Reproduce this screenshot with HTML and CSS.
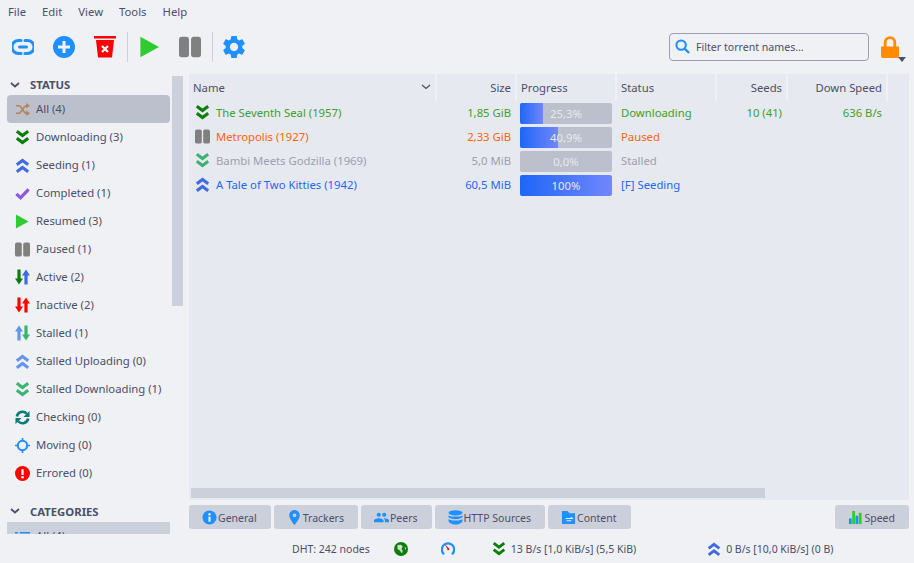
FILE: index.html
```html
<!DOCTYPE html>
<html lang="en">
<head>
  <meta charset="UTF-8">
  <title>qBittorrent</title>
  <link rel="stylesheet" href="styles.css">
</head>
<body>
  <svg class="sprite" width="0" height="0">
    <symbol id="i-down" viewBox="0 0 15 15"><path d="M1.800 1.200 7.500 5.500l5.700-4.300M1.800 8.200 7.500 12.500l5.700-4.300" fill="none" stroke="currentColor" stroke-width="3"/></symbol>
    <symbol id="i-up" viewBox="0 0 15 15"><path d="M1.800 6.800 7.500 2.500l5.700 4.300M1.800 13.800 7.500 9.500l5.700 4.300" fill="none" stroke="currentColor" stroke-width="3"/></symbol>
    <symbol id="i-play" viewBox="0 0 16 16"><path d="M1 .5v15L14.500 8z" fill="currentColor"/></symbol>
    <symbol id="i-pause" viewBox="0 0 16 16"><rect x="0" y=".5" width="7.250" height="15" rx="2" fill="currentColor"/><rect x="8.750" y=".5" width="7.250" height="15" rx="2" fill="currentColor"/></symbol>
    <symbol id="i-arrow-down" viewBox="0 0 8 16"><path d="M4 15.500 0 9.500h2.400V.5h3.200v9H8z" fill="currentColor"/></symbol>
    <symbol id="i-arrow-up" viewBox="0 0 8 16"><path d="M4 .5 8 6.500H5.600v9H2.400v-9H0z" fill="currentColor"/></symbol>
  </svg>

  <nav class="menubar">
    <a>File</a><a>Edit</a><a>View</a><a>Tools</a><a>Help</a>
  </nav>

  <div class="toolbar">
    <svg class="tool tool-link" viewBox="0 0 22 22"><path d="M9 4.500H6.500a6.500 6.500 0 0 0 0 13H9M13 4.500h2.500a6.500 6.500 0 0 1 0 13H13" fill="none" stroke="#1e90ff" stroke-width="3" stroke-linecap="round"/><path d="M7.500 11h7" stroke="#1e90ff" stroke-width="3" stroke-linecap="round"/></svg>
    <svg class="tool tool-add" viewBox="0 0 22 22"><circle cx="11" cy="11" r="11" fill="#1e90ff"/><path d="M11 5v12M5 11h12" stroke="#eff1f5" stroke-width="3"/></svg>
    <svg class="tool tool-trash" viewBox="0 0 22 22"><path d="M0 0h22v2.500H0z" fill="#f00"/><path d="M2 4h18l-2 17.500H4z" fill="#f00"/><path d="M8 10l6 6M14 10l-6 6" stroke="#fff" stroke-width="2.200"/></svg>
    <span class="tool-sep"></span>
    <svg class="tool tool-play"><use href="#i-play"/></svg>
    <svg class="tool tool-pause"><use href="#i-pause"/></svg>
    <span class="tool-sep"></span>
    <svg class="tool tool-gear" viewBox="2.500 2.500 19 19"><path fill="#1e90ff" d="M19.140 12.940c.04-.3.06-.61.06-.94 0-.32-.02-.64-.07-.94l2.030-1.580c.18-.14.23-.41.12-.61l-1.920-3.320c-.12-.22-.37-.29-.59-.22l-2.390.96c-.5-.38-1.030-.7-1.620-.94l-.36-2.540c-.04-.24-.24-.41-.48-.41h-3.840c-.24 0-.43.17-.47.41l-.36 2.540c-.59.24-1.130.57-1.620.94l-2.390-.96c-.22-.08-.47 0-.59.22L2.740 8.870c-.12.21-.08.47.12.61l2.030 1.580c-.05.3-.09.63-.09.94s.02.64.07.94l-2.030 1.580c-.18.14-.23.41-.12.61l1.920 3.320c.12.22.37.29.59.22l2.390-.96c.5.38 1.030.7 1.620.94l.36 2.540c.05.24.24.41.48.41h3.840c.24 0 .44-.17.47-.41l.36-2.540c.59-.24 1.130-.56 1.620-.94l2.390.96c.22.08.47 0 .59-.22l1.920-3.320c.12-.22.07-.47-.12-.61l-2.010-1.580zM12 15.600c-1.980 0-3.600-1.620-3.600-3.600s1.620-3.600 3.600-3.600 3.600 1.620 3.600 3.600-1.620 3.600-3.600 3.600z"/></svg>
    <label class="filter">
      <svg class="filter-icon" viewBox="0 0 16 16"><circle cx="6.500" cy="6.500" r="5" fill="none" stroke="#1e90ff" stroke-width="2.200"/><path d="M10 10l5 5" stroke="#1e90ff" stroke-width="2.400"/></svg>
      <span>Filter torrent names…</span>
    </label>
    <div class="lock">
      <svg class="lock-icon" viewBox="0 0 18 22"><path d="M4.200 12V6.500a4.800 4.800 0 0 1 9.600 0V12" fill="none" stroke="#ff8c00" stroke-width="2.800"/><path d="M0 10.500h18V20a2 2 0 0 1-2 2H2a2 2 0 0 1-2-2z" fill="#ff8c00"/></svg>
      <span class="lock-arrow"></span>
    </div>
  </div>

  <div class="main">
    <aside class="side">
      <div class="side-list">
        <h3 class="side-head"><svg class="head-chev" viewBox="0 0 10 6"><path d="M1 1l4 3.500L9 1" fill="none" stroke="#4c4f69" stroke-width="1.800"/></svg>STATUS</h3>
        <a class="side-item selected"><svg class="ico" viewBox="0 0 16 16"><path d="M1 4h3c3 0 5 8 8 8h2M1 12h3c3 0 5-8 8-8h2" fill="none" stroke="#b5835a" stroke-width="1.800"/><path d="M12 1l4 3-4 3zM12 9l4 3-4 3z" fill="#b5835a"/></svg>All (4)</a>
        <a class="side-item"><svg class="ico c-down"><use href="#i-down"/></svg>Downloading (3)</a>
        <a class="side-item"><svg class="ico c-up"><use href="#i-up"/></svg>Seeding (1)</a>
        <a class="side-item"><svg class="ico" viewBox="0 0 16 16"><path d="M1.500 8.500 6 12.500 14.500 3.500" fill="none" stroke="#8a5cdc" stroke-width="3.400"/></svg>Completed (1)</a>
        <a class="side-item"><svg class="ico c-play"><use href="#i-play"/></svg>Resumed (3)</a>
        <a class="side-item"><svg class="ico c-pause"><use href="#i-pause"/></svg>Paused (1)</a>
        <a class="side-item"><span class="ico-pair"><svg class="c-down"><use href="#i-arrow-down"/></svg><svg class="c-up"><use href="#i-arrow-up"/></svg></span>Active (2)</a>
        <a class="side-item"><span class="ico-pair c-red"><svg><use href="#i-arrow-down"/></svg><svg><use href="#i-arrow-up"/></svg></span>Inactive (2)</a>
        <a class="side-item"><span class="ico-pair"><svg class="c-stall-up"><use href="#i-arrow-up"/></svg><svg class="c-stall-down"><use href="#i-arrow-down"/></svg></span>Stalled (1)</a>
        <a class="side-item"><svg class="ico c-stall-up"><use href="#i-up"/></svg>Stalled Uploading (0)</a>
        <a class="side-item"><svg class="ico c-stall-down"><use href="#i-down"/></svg>Stalled Downloading (1)</a>
        <a class="side-item"><svg class="ico" viewBox="0 0 16 16"><path d="M2 7a6 6 0 0 1 10.500-3M14 9a6 6 0 0 1-10.500 3" fill="none" stroke="#0b7a75" stroke-width="2.800"/><path d="M15.500 1v6.500H9zM.5 15V8.500H7z" fill="#0b7a75"/></svg>Checking (0)</a>
        <a class="side-item"><svg class="ico" viewBox="0 0 16 16"><circle cx="8" cy="8" r="5" fill="none" stroke="#1e90ff" stroke-width="2.200"/><path d="M8 0v3M8 13v3M0 8h3M13 8h3" stroke="#1e90ff" stroke-width="1.800"/></svg>Moving (0)</a>
        <a class="side-item"><svg class="ico" viewBox="0 0 16 16"><circle cx="8" cy="8" r="8" fill="#f00"/><path d="M8 3.500v6" stroke="#fff" stroke-width="2.400"/><circle cx="8" cy="12" r="1.400" fill="#fff"/></svg>Errored (0)</a>
        <h3 class="side-head head-cat"><svg class="head-chev" viewBox="0 0 10 6"><path d="M1 1l4 3.500L9 1" fill="none" stroke="#4c4f69" stroke-width="1.800"/></svg>CATEGORIES</h3>
        <a class="side-item cat-selected"><svg class="ico" viewBox="0 0 16 16"><path d="M5 4h11M5 8h11M5 12h11M0 4h3M0 8h3M0 12h3" stroke="#1e90ff" stroke-width="1.800"/></svg>All (4)</a>
      </div>
      <div class="side-scroll"><div class="side-thumb"></div></div>
    </aside>

    <section class="content">
      <div class="table-wrap">
        <table class="torrents">
          <colgroup>
            <col class="col-name"><col class="col-size"><col class="col-prog"><col class="col-status"><col class="col-seeds"><col class="col-speed"><col class="col-rest">
          </colgroup>
          <thead>
            <tr>
              <th class="name-head">Name<svg class="sort" viewBox="0 0 10 6"><path d="M1 1l4 3.500L9 1" fill="none" stroke="#4c4f69" stroke-width="1.300"/></svg></th>
              <th class="num">Size</th>
              <th>Progress</th>
              <th>Status</th>
              <th class="num">Seeds</th>
              <th class="num">Down Speed</th>
              <th class="last"></th>
            </tr>
          </thead>
          <tbody>
            <tr class="st-down">
              <td class="name"><svg class="ico c-down"><use href="#i-down"/></svg>The Seventh Seal (1957)</td>
              <td class="num">1,85 GiB</td>
              <td class="prog"><div class="bar"><div class="fill" style="width: 25.3%"></div><span>25,3%</span></div></td>
              <td>Downloading</td>
              <td class="num">10 (41)</td>
              <td class="num">636 B/s</td>
              <td></td>
            </tr>
            <tr class="st-paused">
              <td class="name"><svg class="ico c-pause"><use href="#i-pause"/></svg>Metropolis (1927)</td>
              <td class="num">2,33 GiB</td>
              <td class="prog"><div class="bar"><div class="fill" style="width: 40.9%"></div><span>40,9%</span></div></td>
              <td>Paused</td>
              <td></td><td></td><td></td>
            </tr>
            <tr class="st-stalled">
              <td class="name"><svg class="ico c-stall-down"><use href="#i-down"/></svg>Bambi Meets Godzilla (1969)</td>
              <td class="num">5,0 MiB</td>
              <td class="prog"><div class="bar"><span>0,0%</span></div></td>
              <td>Stalled</td>
              <td></td><td></td><td></td>
            </tr>
            <tr class="st-seed">
              <td class="name"><svg class="ico c-up"><use href="#i-up"/></svg>A Tale of Two Kitties (1942)</td>
              <td class="num">60,5 MiB</td>
              <td class="prog"><div class="bar"><div class="fill" style="width: 100%"></div><span>100%</span></div></td>
              <td>[F] Seeding</td>
              <td></td><td></td><td></td>
            </tr>
          </tbody>
        </table>
        <div class="hscroll"><div class="hthumb"></div></div>
      </div>

      <div class="tabs">
        <a class="tab tab-general"><svg class="tab-ico" viewBox="0 0 16 16"><circle cx="8" cy="8" r="7.500" fill="#1e90ff"/><circle cx="8" cy="4.500" r="1.300" fill="#eff1f5"/><path d="M8 7v5.500" stroke="#eff1f5" stroke-width="2.200"/></svg>General</a>
        <a class="tab tab-trackers"><svg class="tab-ico" viewBox="4 2 16 20"><path fill="#1e90ff" d="M12 2C8.130 2 5 5.130 5 9c0 5.250 7 13 7 13s7-7.750 7-13c0-3.870-3.130-7-7-7zm0 9.500c-1.380 0-2.500-1.120-2.500-2.500s1.120-2.500 2.500-2.500 2.500 1.120 2.500 2.500-1.120 2.500-2.500 2.500z"/></svg>Trackers</a>
        <a class="tab tab-peers"><svg class="tab-ico" viewBox="1 4 22 16"><path fill="#1e90ff" d="M16 11c1.660 0 2.990-1.340 2.990-3S17.660 5 16 5c-1.660 0-3 1.340-3 3s1.340 3 3 3zm-8 0c1.660 0 2.990-1.340 2.990-3S9.660 5 8 5C6.340 5 5 6.340 5 8s1.340 3 3 3zm0 2c-2.330 0-7 1.170-7 3.500V19h14v-2.500c0-2.330-4.670-3.500-7-3.500zm8 0c-.29 0-.62.020-.97.050 1.160.84 1.970 1.970 1.970 3.450V19h6v-2.500c0-2.330-4.670-3.500-7-3.500z"/></svg>Peers</a>
        <a class="tab tab-http"><svg class="tab-ico" viewBox="0 0 16 16"><ellipse cx="8" cy="3" rx="7.500" ry="2.800" fill="#1e90ff"/><path d="M.5 5v2c0 1.500 3.300 2.800 7.500 2.800S15.500 8.500 15.500 7V5C15.500 6.500 12.200 7 8 7S.5 6.500.5 5zM.5 9v2.500C.5 13.200 3.800 15.500 8 15.500s7.500-2.300 7.500-4V9c0 1.500-3.300 2.300-7.500 2.300S.5 10.500.5 9z" fill="#1e90ff"/></svg>HTTP Sources</a>
        <a class="tab tab-content"><svg class="tab-ico" viewBox="0 0 16 16"><path d="M1 1h6l2 2.500h6V15H1z" fill="#1e90ff"/><path d="M5 9h7l-1.500-1.500M11 11.500H6" fill="none" stroke="#eff1f5" stroke-width="1.200"/></svg>Content</a>
        <a class="tab tab-speed"><svg class="tab-ico" viewBox="0 0 16 16"><rect x="1" y="9" width="3" height="6" fill="#1e90ff"/><rect x="4.500" y="1" width="3" height="14" fill="#2ecc2e"/><rect x="8" y="6" width="3" height="9" fill="#1e90ff"/><rect x="11.500" y="3" width="3" height="12" fill="#2ecc2e"/></svg>Speed</a>
      </div>
    </section>
  </div>

  <footer class="statusbar">
    <span class="dht">DHT: 242 nodes</span>
    <svg class="st-ico st-globe" viewBox="0 0 16 16"><circle cx="8" cy="8" r="8" fill="#0a7d0a"/><path d="M4 3.500 8 3l2 2-1.500 3L10 10l-1 3-2-3-3-2zM12 5l2 2-1 2z" fill="#eff1f5" opacity=".85"/></svg>
    <svg class="st-ico st-gauge" viewBox="0 0 16 16"><path d="M3.500 14a7 7 0 1 1 9 0" fill="none" stroke="#1e90ff" stroke-width="2.500"/><path d="M4.500 2.500 10 8l-2 2z" fill="#e02020"/></svg>
    <svg class="st-ico st-dl c-down"><use href="#i-down"/></svg>
    <span class="rate">13 B/s [1,0 KiB/s] (5,5 KiB)</span>
    <svg class="st-ico st-ul c-up"><use href="#i-up"/></svg>
    <span class="rate">0 B/s [10,0 KiB/s] (0 B)</span>
  </footer>
</body>
</html>
```

FILE: styles.css
```css
* {
  box-sizing: border-box;
}
html, body {
  height: 100%;
}
body {
  margin: 0;
  width: 914px;
  height: 563px;
  overflow: hidden;
  display: flex;
  flex-direction: column;
  background: #eff1f5;
  color: #4c4f69;
  font-family: "Noto Sans", sans-serif;
  font-size: 11.3px;
}
.sprite {
  position: absolute;
}

/* menu + toolbar */
.menubar {
  height: 24px;
  flex: none;
  display: flex;
  align-items: center;
  padding: 0 0 2px 8px;
  gap: 16px;
}
.toolbar {
  height: 50px;
  display: flex;
  align-items: center;
  padding: 0 0 4px 12px;
  flex: none;
}
.tool {
  width: 22px;
  height: 22px;
  flex: none;
  margin-right: 19px;
}
.tool-trash {
  margin-right: 11px;
}
.tool-play {
  color: #2ecc2e;
  margin-right: 18px;
}
.tool-pause {
  color: #808080;
  margin-right: 11px;
}
.tool-sep {
  width: 1px;
  height: 30px;
  background: #ccd0da;
  margin-right: 11px;
}
.tool-gear {
  margin: 0 0 0 -1px;
}
.filter {
  margin-left: auto;
  width: 200px;
  height: 28px;
  border: 1px solid #9ca0b0;
  border-radius: 4px;
  display: flex;
  align-items: center;
  padding-left: 5px;
  gap: 6px;
  font-size: 10.6px;
}
.filter-icon {
  width: 15px;
  height: 15px;
  margin-bottom: 2px;
}
.lock {
  width: 45px;
  height: 28px;
  position: relative;
  padding: 3px 0 0 12px;
}
.lock-icon {
  width: 18px;
  height: 22px;
  display: block;
}
.lock-arrow {
  position: absolute;
  left: 29px;
  top: 24px;
  border: 4.500px solid transparent;
  border-top: 5px solid #4c4f69;
  border-bottom: 0;
}

/* sidebar */
.main {
  flex: none;
  height: 460px;
  display: flex;
}
.side {
  width: 189px;
  flex: none;
  display: flex;
}
.side-list {
  width: 170px;
  padding-left: 7px;
  overflow: hidden;
  flex: none;
}
.side-head {
  margin: 0;
  height: 21px;
  display: flex;
  align-items: center;
  font-size: 11.3px;
  font-weight: bold;
  padding-left: 3px;
  gap: 10px;
}
.head-cat {
  margin-top: 13px;
  height: 22px;
}
.head-chev {
  width: 10px;
  height: 6px;
}
.side-item {
  height: 28px;
  display: flex;
  align-items: center;
  padding: 0 0 1px 8px;
  gap: 6px;
  border-radius: 4px;
  white-space: nowrap;
}
.side-item .ico,
.side-item .ico-pair {
  margin-top: 1px;
}
.side-item.selected {
  background: #bcc0cc;
}
.side-item.cat-selected {
  background: #ccd0da;
  border-radius: 0;
}
.ico {
  width: 15px;
  height: 15px;
  flex: none;
}
.ico-pair {
  width: 15px;
  height: 16px;
  flex: none;
  display: flex;
}
.ico-pair svg {
  width: 8px;
  height: 16px;
  margin-right: -1px;
  flex: none;
}
.c-down { color: #0a7d0a; }
.c-up { color: #4169e1; }
.c-play { color: #2ecc2e; }
.c-pause { color: #808080; }
.c-red { color: #f00; }
.c-stall-up { color: #6495ed; }
.c-stall-down { color: #3cb371; }
.side-scroll {
  width: 11px;
  margin-left: 2px;
  padding-top: 2px;
}
.side-thumb {
  height: 230px;
  background: #ccd0da;
}

/* torrent table */
.content {
  width: 720px;
  flex: none;
  display: flex;
  flex-direction: column;
}
.table-wrap {
  height: 426px;
  background: #e6e9ef;
  position: relative;
}
.torrents {
  width: 719px;
  table-layout: fixed;
  border-collapse: separate;
  border-spacing: 0;
}
.col-name { width: 248px; }
.col-size { width: 80px; }
.col-prog { width: 100px; }
.col-status { width: 100px; }
.col-seeds { width: 71px; }
.col-speed { width: 100px; }
.col-rest { width: 20px; }
.torrents th {
  height: 27px;
  font-weight: normal;
  text-align: left;
  padding: 0 4px 1px;
  border-right: 2px solid #eff1f5;
  position: relative;
}
.torrents th.last {
  border-right: 0;
}
.torrents td {
  height: 24px;
  padding: 0 4px 1px;
  white-space: nowrap;
}
.torrents td.prog {
  padding-bottom: 0;
}
.torrents .num {
  text-align: right;
}
.torrents td.num {
  padding-right: 6px;
}
.name-head .sort {
  position: absolute;
  right: 4px;
  top: 10px;
  width: 10px;
  height: 6px;
}
.torrents td.name {
  padding-left: 6px;
}
.name .ico {
  vertical-align: -3px;
  margin-right: 6px;
}
.st-down { color: #40a02b; }
.st-paused { color: #fe640b; }
.st-stalled { color: #9ca0b0; }
.st-seed { color: #1e66f5; }
.bar {
  position: relative;
  width: 92px;
  height: 21px;
  margin-left: -1px;
  background: #bcc0cc;
  border-radius: 2px;
  overflow: hidden;
}
.fill {
  height: 100%;
  background: linear-gradient(90deg, #1e66f5, #7287fd);
}
.bar span {
  position: absolute;
  left: 0;
  right: 0;
  top: 3px;
  text-align: center;
  color: #e6e9ef;
}
.hscroll {
  position: absolute;
  left: 2px;
  right: 0;
  bottom: 2px;
  height: 10px;
}
.hthumb {
  width: 574px;
  height: 100%;
  background: #ccd0da;
}

/* tabs */
.tabs {
  margin-top: 5px;
  height: 24px;
  display: flex;
  gap: 3px;
  font-size: 10.5px;
}
.tab {
  display: flex;
  align-items: center;
  gap: 1px;
  padding: 1px 14px 0 13px;
  background: #ccd0da;
  border-radius: 3px;
  white-space: nowrap;
}
.tab-ico {
  width: 15px;
  height: 15px;
  flex: none;
  margin-top: -1px;
}
.tab-speed {
  margin-left: auto;
}

/* status bar */
.statusbar {
  flex: 1;
  display: flex;
  align-items: center;
  padding: 1px 0 0 292px;
  font-size: 10.5px;
}
.st-ico {
  width: 14px;
  height: 14px;
  flex: none;
}
.st-globe { margin-left: 24px; }
.st-gauge { margin-left: 33px; }
.st-dl { margin-left: 37px; margin-right: 5px; }
.st-ul { margin-left: 71px; margin-right: 5px; }
```
